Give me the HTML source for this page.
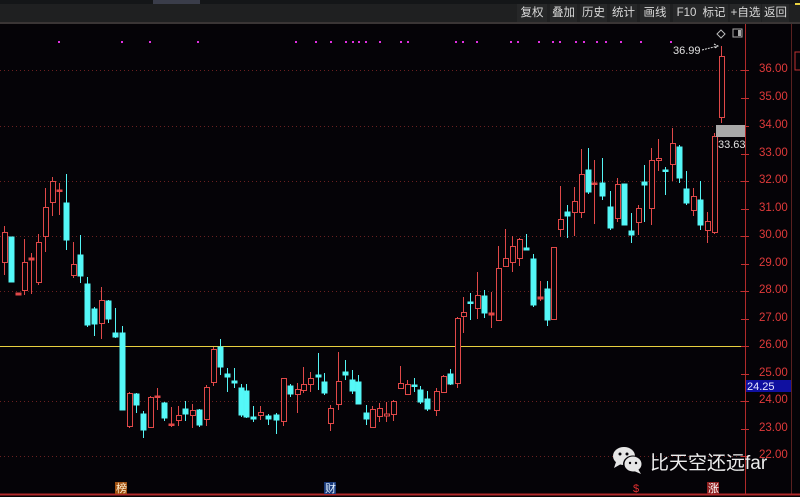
<!DOCTYPE html>
<html><head><meta charset="utf-8"><style>
html,body{margin:0;padding:0;background:#050307;width:800px;height:497px;overflow:hidden;font-family:"Liberation Sans","Noto Sans CJK SC",sans-serif}
.tb{position:absolute;top:4px;height:18px;line-height:18px;font-size:11.5px;color:#d8d8d8;background:#262728;text-align:center}
.lbl{position:absolute;font-size:11.5px;color:#e03a3a;left:759px}
</style></head><body>
<div style="position:absolute;left:0;top:0;width:800px;height:4px;background:#141618"></div>
<div style="position:absolute;left:153px;top:0;width:47px;height:4px;background:#3a3d4a"></div>
<div style="position:absolute;left:0;top:4px;width:800px;height:18px;background:#1f2021"></div>
<div style="position:absolute;left:0;top:22px;width:800px;height:2px;background:#3a3535"></div>
<div class="tb" style="left:517px;width:30px">复权</div>
<div class="tb" style="left:550px;width:27px">叠加</div>
<div class="tb" style="left:580px;width:27px">历史</div>
<div class="tb" style="left:610px;width:27px">统计</div>
<div class="tb" style="left:640px;width:30px">画线</div>
<div class="tb" style="left:673px;width:27px">F10</div>
<div class="tb" style="left:700px;width:28px">标记</div>
<div class="tb" style="left:730px;width:31px">+自选</div>
<div class="tb" style="left:762px;width:27px">返回</div>
<svg width="800" height="497" style="position:absolute;left:0;top:0" xmlns="http://www.w3.org/2000/svg">
<g stroke="#6a2020" stroke-dasharray="1,3" stroke-width="1">
<line x1="0" y1="70.5" x2="745" y2="70.5"/><line x1="0" y1="126.5" x2="745" y2="126.5"/><line x1="0" y1="181.5" x2="745" y2="181.5"/><line x1="0" y1="236.5" x2="745" y2="236.5"/><line x1="0" y1="291.5" x2="745" y2="291.5"/><line x1="0" y1="401.5" x2="745" y2="401.5"/><line x1="0" y1="456.5" x2="745" y2="456.5"/>
</g>
<line x1="0" y1="346.5" x2="745" y2="346.5" stroke="#e8d040" stroke-width="1"/>
<line x1="745.5" y1="24" x2="745.5" y2="494" stroke="#b02a2a"/>
<line x1="791.5" y1="24" x2="791.5" y2="494" stroke="#5a2020"/>
<line x1="0" y1="494.5" x2="800" y2="494.5" stroke="#b02a2a" stroke-width="2"/>
<g stroke="#c03030"><line x1="741" y1="70.5" x2="749" y2="70.5"/><line x1="741" y1="98.5" x2="749" y2="98.5"/><line x1="741" y1="126.5" x2="749" y2="126.5"/><line x1="741" y1="154.5" x2="749" y2="154.5"/><line x1="741" y1="181.5" x2="749" y2="181.5"/><line x1="741" y1="209.5" x2="749" y2="209.5"/><line x1="741" y1="236.5" x2="749" y2="236.5"/><line x1="741" y1="264.5" x2="749" y2="264.5"/><line x1="741" y1="291.5" x2="749" y2="291.5"/><line x1="741" y1="319.5" x2="749" y2="319.5"/><line x1="741" y1="346.5" x2="749" y2="346.5"/><line x1="741" y1="374.5" x2="749" y2="374.5"/><line x1="741" y1="401.5" x2="749" y2="401.5"/><line x1="741" y1="429.5" x2="749" y2="429.5"/><line x1="741" y1="456.5" x2="749" y2="456.5"/></g>
<g fill="#e030e0">
<rect x="58" y="41" width="2" height="2"/><rect x="121" y="41" width="2" height="2"/><rect x="149" y="41" width="2" height="2"/><rect x="197" y="41" width="2" height="2"/><rect x="295" y="41" width="2" height="2"/><rect x="315" y="41" width="2" height="2"/><rect x="330" y="41" width="2" height="2"/><rect x="345" y="41" width="2" height="2"/><rect x="352" y="41" width="2" height="2"/><rect x="358" y="41" width="2" height="2"/><rect x="365" y="41" width="2" height="2"/><rect x="379" y="41" width="2" height="2"/><rect x="400" y="41" width="2" height="2"/><rect x="407" y="41" width="2" height="2"/><rect x="455" y="41" width="2" height="2"/><rect x="462" y="41" width="2" height="2"/><rect x="476" y="41" width="2" height="2"/><rect x="510" y="41" width="2" height="2"/><rect x="517" y="41" width="2" height="2"/><rect x="538" y="41" width="2" height="2"/><rect x="552" y="41" width="2" height="2"/><rect x="559" y="41" width="2" height="2"/><rect x="575" y="41" width="2" height="2"/><rect x="583" y="41" width="2" height="2"/><rect x="596" y="41" width="2" height="2"/><rect x="605" y="41" width="2" height="2"/><rect x="620" y="41" width="2" height="2"/><rect x="640" y="41" width="2" height="2"/><rect x="670" y="41" width="2" height="2"/>
</g>
<g id="up" stroke="#e04848" fill="#050307" stroke-width="1">
<path d="M4.5 226V275M24.5 239V295M31.5 253V294M38.5 234V285M45.5 188V252M52.5 177V216M59.5 183V215M73.5 242V278M101.5 287V339M129.5 392V428M150.5 396V428M157.5 388V410M171.5 407V427M178.5 406V426M192.5 404V428M206.5 385V426M213.5 347V386M260.5 406V420M283.5 378V426M297.5 383V413M303.5 367V393M310.5 372V392M330.5 405V431M338.5 352V410M372.5 406V428M379.5 403V422M386.5 402V422M393.5 400V421M400.5 366V389M407.5 380V395M436.5 388V416M443.5 375V392M457.5 317V388M463.5 297V333M477.5 272V319M491.5 292V328M498.5 246V321M505.5 229V266M512.5 236V272M519.5 238V266M540.5 281V301M553.5 247V319M560.5 186V237M574.5 187V236M581.5 149V218M594.5 160V224M617.5 178V222M638.5 205V235M651.5 148V225M658.5 139V171M672.5 128V181M693.5 188V216M707.5 212V243M714.5 133V234M721.5 46V123"/>
<rect x="2.5" y="232.5" width="5" height="30"/><rect x="16" y="293" width="5" height="2" fill="#e04848"/><rect x="22.5" y="262.5" width="5" height="28"/><rect x="29" y="258" width="5" height="2" fill="#e04848"/><rect x="36.5" y="242.5" width="5" height="40"/><rect x="43.5" y="207.5" width="5" height="29"/><rect x="50.5" y="181.5" width="5" height="21"/><rect x="57" y="190" width="5" height="1.5" fill="#e04848"/><rect x="71.5" y="264.5" width="5" height="11"/><rect x="99.5" y="300.5" width="5" height="23"/><rect x="127.5" y="393.5" width="5" height="33"/><rect x="148.5" y="397.5" width="5" height="30"/><rect x="155" y="396" width="5" height="1.5" fill="#e04848"/><rect x="169" y="424" width="5" height="1.5" fill="#e04848"/><rect x="176.5" y="415.5" width="5" height="5"/><rect x="190.5" y="410.5" width="5" height="5"/><rect x="204.5" y="387.5" width="5" height="32"/><rect x="211.5" y="349.5" width="5" height="33"/><rect x="258.5" y="412.5" width="5" height="3"/><rect x="281.5" y="378.5" width="5" height="43"/><rect x="295.5" y="389.5" width="5" height="5"/><rect x="301.5" y="384.5" width="5" height="6"/><rect x="308.5" y="378.5" width="5" height="6"/><rect x="328.5" y="408.5" width="5" height="15"/><rect x="336.5" y="381.5" width="5" height="23"/><rect x="370.5" y="409.5" width="5" height="18"/><rect x="377.5" y="408.5" width="5" height="8"/><rect x="384.5" y="414" width="5" height="2"/><rect x="391.5" y="401.5" width="5" height="13"/><rect x="398.5" y="383.5" width="5" height="5"/><rect x="405.5" y="384.5" width="5" height="10"/><rect x="434.5" y="391.5" width="5" height="19"/><rect x="441.5" y="376.5" width="5" height="16"/><rect x="455.5" y="318.5" width="5" height="65"/><rect x="461.5" y="312.5" width="5" height="4"/><rect x="475.5" y="295.5" width="5" height="13"/><rect x="489" y="313" width="5" height="2" fill="#e04848"/><rect x="496.5" y="268.5" width="5" height="52"/><rect x="503.5" y="258.5" width="5" height="8"/><rect x="510.5" y="246.5" width="5" height="16"/><rect x="517.5" y="239.5" width="5" height="19"/><rect x="538" y="297" width="5" height="2" fill="#e04848"/><rect x="551.5" y="247.5" width="5" height="72"/><rect x="558.5" y="219.5" width="5" height="10"/><rect x="572.5" y="201.5" width="5" height="11"/><rect x="579.5" y="174.5" width="5" height="38"/><rect x="592" y="183" width="5" height="1.5" fill="#e04848"/><rect x="615.5" y="184.5" width="5" height="34"/><rect x="636.5" y="208.5" width="5" height="14"/><rect x="649.5" y="160.5" width="5" height="48"/><rect x="656.5" y="158.5" width="5" height="2"/><rect x="670.5" y="143.5" width="5" height="21"/><rect x="691.5" y="196.5" width="5" height="14"/><rect x="705.5" y="221.5" width="5" height="9"/><rect x="712.5" y="136.5" width="5" height="96"/><rect x="719.5" y="56.5" width="5" height="61"/>
</g>
<g stroke="#54f4f4" fill="#54f8f8" stroke-width="1">
<path d="M66.5 174V250M80.5 235V283M87.5 277V327M94.5 307V336M108.5 300V323M115.5 308V338M122.5 326V410M136.5 393V413M143.5 411V438M164.5 402V421M185.5 401V421M199.5 409V427M220.5 339V375M227.5 368V392M234.5 368V388M241.5 384V417M246.5 384V418M253.5 406V422M268.5 414V425M276.5 413V434M290.5 384V397M318.5 353V390M324.5 373V395M345.5 360V380M352.5 370V394M358.5 375V404M366.5 405V425M414.5 378V392M420.5 386V404M427.5 391V411M450.5 369V385M470.5 293V320M484.5 290V318M526.5 234V250M533.5 254V307M547.5 281V326M567.5 205V238M588.5 148V194M602.5 158V200M610.5 191V230M624.5 184V225M631.5 213V243M644.5 165V222M665.5 167V195M679.5 145V183M686.5 171V205M700.5 181V230"/>
<rect x="9" y="237" width="5" height="45"/><rect x="64" y="203" width="5" height="37"/><rect x="78" y="255" width="5" height="21"/><rect x="85" y="284" width="5" height="41"/><rect x="92" y="309" width="5" height="15"/><rect x="106" y="301" width="5" height="18"/><rect x="113" y="333" width="5" height="4"/><rect x="120" y="333" width="5" height="77"/><rect x="134" y="394" width="5" height="11"/><rect x="141" y="414" width="5" height="16"/><rect x="162" y="403" width="5" height="15"/><rect x="183" y="409" width="5" height="5"/><rect x="197" y="410" width="5" height="15"/><rect x="218" y="347" width="5" height="20"/><rect x="225" y="374" width="5" height="3"/><rect x="232" y="381" width="5" height="2"/><rect x="239" y="388" width="5" height="27"/><rect x="244" y="391" width="5" height="26"/><rect x="251" y="417" width="5" height="2"/><rect x="266" y="416" width="5" height="3"/><rect x="274" y="415" width="5" height="5"/><rect x="288" y="386" width="5" height="8"/><rect x="316" y="375" width="5" height="2"/><rect x="322" y="382" width="5" height="11"/><rect x="343" y="372" width="5" height="3"/><rect x="350" y="380" width="5" height="11"/><rect x="356" y="382" width="5" height="22"/><rect x="364" y="413" width="5" height="6"/><rect x="412" y="385" width="5" height="1.5"/><rect x="418" y="390" width="5" height="12"/><rect x="425" y="399" width="5" height="10"/><rect x="448" y="374" width="5" height="10"/><rect x="468" y="302" width="5" height="1.5"/><rect x="482" y="296" width="5" height="17"/><rect x="524" y="248" width="5" height="2"/><rect x="531" y="259" width="5" height="46"/><rect x="545" y="289" width="5" height="31"/><rect x="565" y="212" width="5" height="4"/><rect x="586" y="170" width="5" height="22"/><rect x="600" y="183" width="5" height="13"/><rect x="608" y="207" width="5" height="21"/><rect x="622" y="184" width="5" height="41"/><rect x="629" y="231" width="5" height="4"/><rect x="642" y="182" width="5" height="3"/><rect x="663" y="170" width="5" height="1.5"/><rect x="677" y="147" width="5" height="31"/><rect x="684" y="189" width="5" height="14"/><rect x="698" y="200" width="5" height="25"/>
</g>
<rect x="716" y="125" width="29" height="12" fill="#a8a8a8"/>
<text x="718" y="148" font-size="11" fill="#e0e0e0" font-family="Liberation Sans">33.63</text>
<text x="673" y="54" font-size="11" fill="#e0e0e0" font-family="Liberation Sans">36.99</text>
<path d="M702 50L718 46M714 44L718 46L715 48" stroke="#ddd" fill="none" stroke-dasharray="2,1"/>
<path d="M721 30L725 34L721 38L717 34Z" stroke="#bbb" fill="none"/>
<rect x="733" y="29" width="9" height="8" stroke="#aaa" fill="none"/><rect x="738" y="30" width="3" height="6" fill="#aaa"/>
<rect x="746" y="380" width="45" height="12" fill="#1010a0"/>
<text x="747" y="390" font-size="11" fill="#e8e8ff" font-family="Liberation Sans">24.25</text>
<rect x="795" y="52" width="8" height="18" stroke="#c03030" fill="none"/>
<line x1="795" y1="4" x2="800" y2="4" stroke="#e8d040" stroke-width="2"/>
<rect x="115" y="482" width="12" height="12" fill="#a05010"/>
<rect x="324" y="482" width="12" height="12" fill="#1a3a7a"/>
<rect x="707" y="482" width="12" height="12" fill="#902020"/>
<text x="116" y="492" font-size="11" fill="#fff0d0" font-family="Noto Sans CJK SC">榜</text>
<text x="325" y="492" font-size="11" fill="#e0f0ff" font-family="Noto Sans CJK SC">财</text>
<text x="633" y="492" font-size="11" fill="#e03030" font-family="Liberation Sans">$</text>
<text x="708" y="492" font-size="11" fill="#fff" font-family="Noto Sans CJK SC">涨</text>
<g fill="#e6e6e6"><ellipse cx="624" cy="456" rx="11" ry="9"/><path d="M616 462L614 468L621 464Z"/></g>
<g fill="#050307"><ellipse cx="633" cy="464" rx="10" ry="8.5"/></g>
<g fill="#e6e6e6"><ellipse cx="633" cy="464" rx="8.5" ry="7.5"/><path d="M638 469L641 474L634 471Z"/></g>
<g fill="#050307"><circle cx="620" cy="454" r="1.5"/><circle cx="627" cy="454" r="1.5"/><circle cx="630" cy="463" r="1.2"/><circle cx="636" cy="463" r="1.2"/></g>
<text x="650" y="469" font-size="19" fill="#ededed" font-family="Liberation Sans, Noto Sans CJK SC, sans-serif">比天空还远far</text>
</svg>
<div class="lbl" style="top:63px">36.00</div><div class="lbl" style="top:91px">35.00</div><div class="lbl" style="top:119px">34.00</div><div class="lbl" style="top:147px">33.00</div><div class="lbl" style="top:174px">32.00</div><div class="lbl" style="top:202px">31.00</div><div class="lbl" style="top:229px">30.00</div><div class="lbl" style="top:257px">29.00</div><div class="lbl" style="top:284px">28.00</div><div class="lbl" style="top:312px">27.00</div><div class="lbl" style="top:339px">26.00</div><div class="lbl" style="top:367px">25.00</div><div class="lbl" style="top:394px">24.00</div><div class="lbl" style="top:422px">23.00</div><div class="lbl" style="top:449px">22.00</div>
</body></html>
